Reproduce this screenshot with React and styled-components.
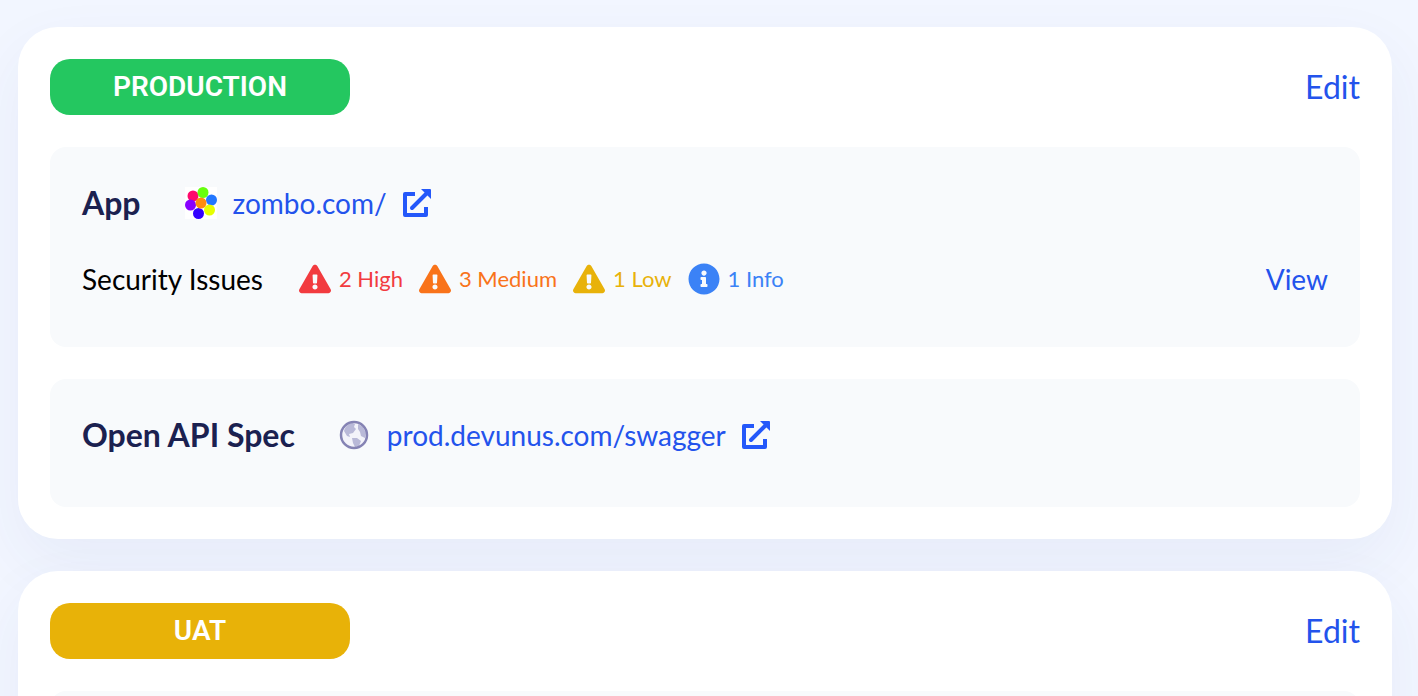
import React from 'react';
import styled, { createGlobalStyle } from 'styled-components';
import { FaExclamationTriangle, FaInfoCircle } from 'react-icons/fa';

const GlobalStyle = createGlobalStyle`
*{
    box-sizing:border-box;
}
body{
    margin:0;
    min-height:100vh;
    background-color:#f2f6ff;
    font-family:Lato, "Liberation Sans", sans-serif;
    color:#000000;
}
h2, h3, p, ul{
    margin:0;
    padding:0;
}
`
const Page = styled.main`
display:flex;
flex-direction:column;
gap:32px;
height:100vh;
overflow:hidden;
padding:27px 26px 0 18px;
`
const Card = styled.section`
flex-shrink:0;
display:flex;
flex-direction:column;
gap:32px;
padding:32px;
border-radius:40px;
background-color:white;
box-shadow:0 24px 64px rgba(50,60,150,0.06);
`
const CardHeader = styled.header`
display:flex;
justify-content:space-between;
align-items:center;
`
const Badge = styled.h2`
width:300px;
border-radius:20px;
background-color:${props=>props.$color};
color:white;
font-family:Roboto, "Liberation Sans", sans-serif;
font-size:28px;
font-weight:600;
line-height:56px;
text-align:center;
`
const TextButton = styled.button`
padding:0;
border:none;
background:none;
color:#2353ec;
font-family:inherit;
font-size:${props=>props.$large?"32px":"28px"};
line-height:40px;
cursor:pointer;
&:hover{
    text-decoration:underline;
}
`
const Panel = styled.div`
display:flex;
flex-direction:column;
gap:32px;
min-height:128px;
padding:34px 32px 46px;
border-radius:16px;
background-color:#f8fafc;
`
const PanelRow = styled.div`
display:flex;
align-items:center;
min-height:44px;
`
const PanelTitle = styled.h3`
margin-right:44px;
color:#1b2150;
font-size:32px;
font-weight:700;
line-height:44px;
`
const SiteLink = styled.a`
display:flex;
align-items:center;
gap:16px;
color:#2353ec;
font-size:28px;
line-height:40px;
text-decoration:none;
`
const IssuesLabel = styled.p`
margin-right:36px;
font-size:28px;
line-height:40px;
`
const IssueList = styled.ul`
display:flex;
flex-grow:1;
gap:16px;
list-style:none;
`
const Issue = styled.li`
display:flex;
align-items:center;
gap:8px;
color:${props=>props.$color};
font-size:22px;
line-height:32px;
`

const FlowerIcon = () => (
    <svg width="32" height="32" viewBox="0 0 32 32" aria-hidden="true">
        <rect width="32" height="32" fill="white" />
        <circle cx="8" cy="9" r="5.5" fill="#ff0a6c" />
        <circle cx="18" cy="5.5" r="5.5" fill="#66ff0d" />
        <circle cx="26.5" cy="13" r="5.5" fill="#2277ff" />
        <circle cx="24.5" cy="23" r="5.5" fill="#e6ff00" />
        <circle cx="13.5" cy="26.5" r="5.5" fill="#3300ff" />
        <circle cx="5.5" cy="18" r="5.5" fill="#8800ff" />
        <circle cx="16" cy="16" r="5.5" fill="#ff8c0d" />
    </svg>
)

const GlobeIcon = () => (
    <svg width="32" height="32" viewBox="0 0 32 32" aria-hidden="true">
        <circle cx="15" cy="16" r="13" fill="#f3f3fa" />
        <path d="M5 12c1-4 4-7 8-8l3 1-1 3 2 2-3 4-4 1 1 3-3-1zM19 5l5 3 3 6-1 5-4-2-1-4-2-3zM13 19l5 0 4 3-2 5-4 1-2-4z" fill="#b9b9d8" />
        <circle cx="15" cy="16" r="13" fill="none" stroke="#8583b4" strokeWidth="2.5" />
    </svg>
)

const ExternalIcon = () => (
    <svg width="28" height="28" viewBox="0 0 28 28" fill="none" aria-hidden="true">
        <path d="M12 5H2v21h21V18" stroke="#2458fa" strokeWidth="4" strokeLinejoin="round" />
        <path d="M9 19 23 5" stroke="#2458fa" strokeWidth="4" strokeLinecap="round" />
        <path d="M18 0h9q1 0 1 1v9z" fill="#2458fa" />
    </svg>
)

const issues = [
    { label:"2 High", color:"#f23b3f", Icon:FaExclamationTriangle },
    { label:"3 Medium", color:"#f9731a", Icon:FaExclamationTriangle },
    { label:"1 Low", color:"#e8b20a", Icon:FaExclamationTriangle },
    { label:"1 Info", color:"#3b82f6", Icon:FaInfoCircle },
]

const Environment = ({name,color,children}) => {
    return (
        <Card>
            <CardHeader>
                <Badge $color={color}>{name}</Badge>
                <TextButton $large>Edit</TextButton>
            </CardHeader>
            {children}
        </Card>
    )
}

const Site = ({title,url,icon}) => {
    return (
        <PanelRow>
            <PanelTitle>{title}</PanelTitle>
            <SiteLink href={"https://"+url}>
                {icon}
                {url}
                <ExternalIcon />
            </SiteLink>
        </PanelRow>
    )
}

const App = () => {
    return (
        <Page>
            <GlobalStyle />
            <Environment name="PRODUCTION" color="#24c760">
                <Panel>
                    <Site title="App" url="zombo.com/" icon={<FlowerIcon />} />
                    <PanelRow>
                        <IssuesLabel>Security Issues</IssuesLabel>
                        <IssueList>
                            {issues.map(({label,color,Icon})=><Issue key={label} $color={color}>
                                <Icon size={32} />
                                {label}
                            </Issue>)}
                        </IssueList>
                        <TextButton>View</TextButton>
                    </PanelRow>
                </Panel>
                <Panel>
                    <Site title="Open API Spec" url="prod.devunus.com/swagger" icon={<GlobeIcon />} />
                </Panel>
            </Environment>
            <Environment name="UAT" color="#e8b208">
                <Panel />
            </Environment>
        </Page>
    )
}

export default App
